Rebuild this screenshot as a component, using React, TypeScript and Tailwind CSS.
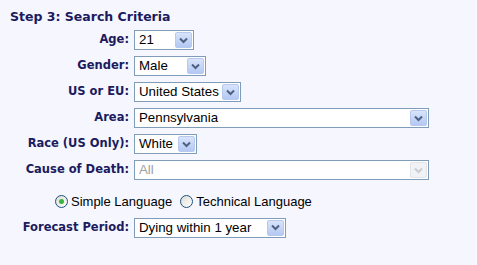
import React from 'react'

const labelCls = "text-right pr-[5px] font-bold text-[11.5px] text-[#1b1b5e] whitespace-nowrap"

function Arrow({ disabled }: { disabled?: boolean }) {
  return (
    <div className={`w-[17px] h-[16px] my-[1px] mr-[1px] flex items-center justify-center rounded-[2px] border ${disabled ? 'border-[#e3e5ea] bg-[#f1f2f5]' : 'border-[#b7c9ef] bg-gradient-to-b from-[#d9e4fb] to-[#b3c8f3]'}`}>
      <svg width="9" height="7" viewBox="0 0 9 7">
        <path d="M1 1.5 L4.5 5 L8 1.5" fill="none" stroke={disabled ? '#c9ccd3' : '#4d6185'} strokeWidth="2" />
      </svg>
    </div>
  )
}

function Select({ value, width, disabled }: { value: string; width: string; disabled?: boolean }) {
  return (
    <div className={`${width} h-[20px] flex items-stretch border border-[#7f9db9] bg-white`}>
      <div className={`flex-1 pl-[4px] text-[13.3px] leading-[18px] ${disabled ? 'text-[#a0a0a0]' : 'text-black'}`}>{value}</div>
      <Arrow disabled={disabled} />
    </div>
  )
}

function Radio({ checked }: { checked?: boolean }) {
  return (
    <div className="w-[13px] h-[13px] rounded-full border border-[#1d5281] bg-gradient-to-br from-[#dcdcd6] to-white flex items-center justify-center">
      {checked && <div className="w-[5px] h-[5px] rounded-full bg-[#3db43d]" />}
    </div>
  )
}

export default function App() {
  const rows: [string, string, string, boolean?][] = [
    ['Age:', '21', 'w-[60px]'],
    ['Gender:', 'Male', 'w-[72px]'],
    ['US or EU:', 'United States', 'w-[107px]'],
    ['Area:', 'Pennsylvania', 'w-[295px]'],
    ['Race (US Only):', 'White', 'w-[63px]'],
    ['Cause of Death:', 'All', 'w-[295px]', true],
  ]
  return (
    <div className="w-[477px] h-[265px] bg-[#f5f6fe] border-r border-r-[#fbfbff] overflow-hidden" style={{ fontFamily: 'Arial, "Liberation Sans", sans-serif' }}>
      <div className="pl-[10px] pt-[9px] font-bold text-[12.5px] text-[#1b1b5e] leading-[15px]" style={{ fontFamily: '"DejaVu Sans", Verdana, sans-serif' }}>
        Step 3: Search Criteria
      </div>
      <div className="grid grid-cols-[134px_auto] gap-y-[6px] mt-[6px] items-center justify-start" style={{ fontFamily: '"DejaVu Sans", Verdana, sans-serif' }}>
        {rows.map(([l, v, w, d]) => (
          <React.Fragment key={l}>
            <div className={labelCls}>{l}</div>
            <div style={{ fontFamily: '"Liberation Sans", Arial, sans-serif' }}>
              <Select value={v} width={w} disabled={d} />
            </div>
          </React.Fragment>
        ))}
      </div>
      <div className="flex items-center mt-[12px] pl-[55px] text-[13px] text-black" style={{ fontFamily: '"Liberation Sans", Arial, sans-serif' }}>
        <Radio checked />
        <span className="ml-[3px]">Simple Language</span>
        <span className="ml-[8px]"><Radio /></span>
        <span className="ml-[3px]">Technical Language</span>
      </div>
      <div className="grid grid-cols-[134px_auto] mt-[6px] items-center justify-start">
        <div className={labelCls} style={{ fontFamily: '"DejaVu Sans", Verdana, sans-serif' }}>Forecast Period:</div>
        <div style={{ fontFamily: '"Liberation Sans", Arial, sans-serif' }}>
          <Select value="Dying within 1 year" width="w-[152px]" />
        </div>
      </div>
    </div>
  )
}
